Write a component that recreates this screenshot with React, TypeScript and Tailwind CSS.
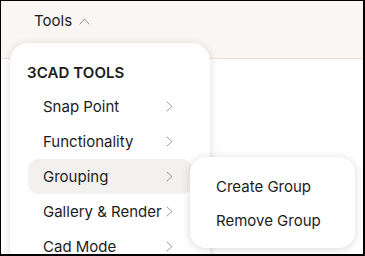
import React from 'react'

const Chevron = ({ className }: { className?: string }) => (
  <svg width="7" height="11" viewBox="0 0 7 11" fill="none" className={className}>
    <polyline points="1,1 6,5.5 1,10" stroke="#9a9aa3" strokeWidth="1" strokeLinejoin="round" strokeLinecap="round" />
  </svg>
)

const items = ['Snap Point', 'Functionality', 'Grouping', 'Gallery & Render', 'Cad Mode']

const App = () => {
  return (
    <div
      className="relative w-[365px] h-[256px] overflow-hidden bg-white border-t border-l border-r-2 border-b-2 border-black text-[#1c1c1c]"
      style={{ fontFamily: 'Inter, "Noto Sans", sans-serif' }}
    >
      <div className="h-[58px] bg-[#f9f6f3] border-b border-[#eedcd5] pl-[33px] pt-[10px]">
        <div className="flex items-center gap-[7px] text-[15px] leading-[20px]">
          <span>Tools</span>
          <svg width="11" height="7" viewBox="0 0 11 7" fill="none">
            <polyline points="1,6 5.5,1 10,6" stroke="#8c90a3" strokeWidth="1" strokeLinejoin="round" strokeLinecap="round" />
          </svg>
        </div>
      </div>

      <div className="absolute left-[9px] top-[42px] w-[200px] h-[260px] rounded-[18px] bg-white shadow-[0_1px_8px_rgba(0,0,0,0.14)] px-[18px] pt-[20px]">
        <div className="ml-[-1px] text-[15px] leading-[20px] font-semibold tracking-[0.1px]">3CAD TOOLS</div>
        <div className="mt-[6px] flex flex-col">
          {items.map((item) => (
            <div
              key={item}
              className={`h-[35px] flex items-center justify-between pl-[15px] pr-[19px] rounded-[10px] text-[15px] ${
                item === 'Grouping' ? 'bg-[#f2f1f0]' : ''
              }`}
            >
              <span className="whitespace-nowrap pt-[1px]">{item}</span>
              <Chevron className="shrink-0" />
            </div>
          ))}
        </div>
      </div>

      <div className="absolute left-[189px] top-[156px] w-[165px] h-[91px] rounded-[16px] bg-white shadow-[0_1px_8px_rgba(0,0,0,0.16)] pl-[26px] pt-[13px]">
        <div className="h-[34px] flex items-center text-[15px] pt-[1px]">Create Group</div>
        <div className="h-[34px] flex items-center text-[15px] pt-[1px]">Remove Group</div>
      </div>
    </div>
  )
}

export default App
